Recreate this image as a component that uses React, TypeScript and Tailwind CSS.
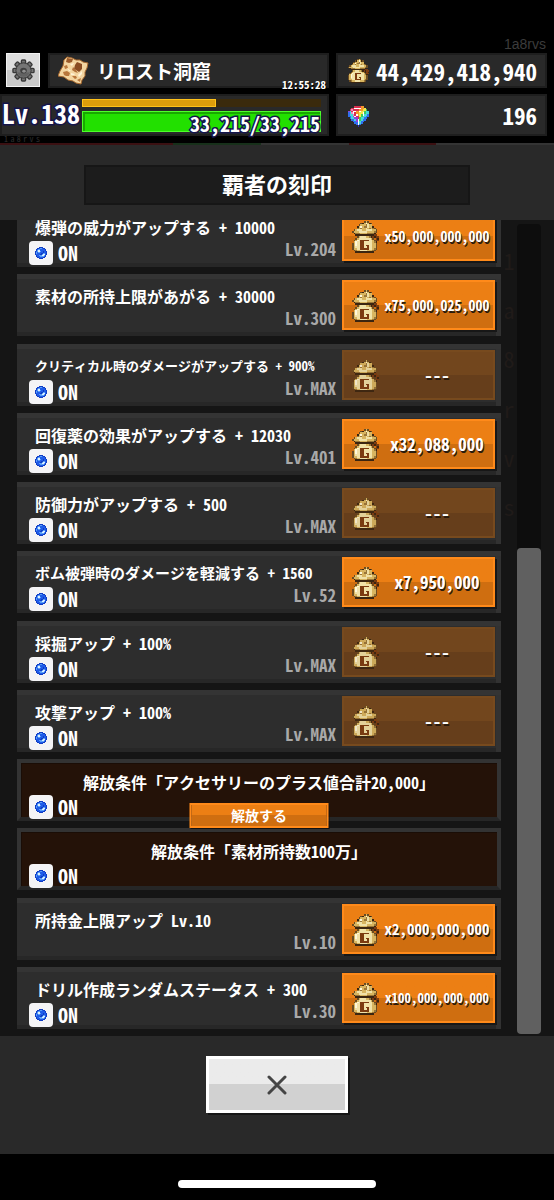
type Palette = Record<string, string>

const bagColors: Palette = {
  k: '#3b2510',
  b: '#7c3b10',
  o: '#6b4c22',
  d: '#9a7638',
  g: '#d8b560',
  c: '#f1e2a8',
  w: '#fff8da',
}

const bagPixels = [
  '.......ogo......',
  '.....okgwgko....',
  '....ogggdcgg....',
  '...kgwgddcggk...',
  '...dgdggcgdgdo..',
  '.ogcccggccccggo.',
  'ogggcccccggggdo.',
  '.kdddggggddddk..',
  '..kkkkkkkkkkkbb.',
  '...ogcccggdkbkbb',
  '..ogcccccccgo.bk',
  '.ogwcbbbbbccgobb',
  '.gwccbbcccccgdk.',
  'ogwccbbcccccggo.',
  'ogwccbbcbbccggo.',
  'ogcccbbccbccggo.',
  'oggccbbbbbccgdo.',
  '.odggccccgggdo..',
  '..kkkkkkkkkkk...',
]

const orbColors: Palette = { b: '#1f5ce8', m: '#5aa0f8', w: '#dcefff', d: '#0f3cc4' }

const orbPixels = [
  '....dddd....',
  '..ddbmmbdd..',
  '.dbmmbbbbbd.',
  '.dmwwbbbbbd.',
  'dbmwwmbbdbbd',
  'dmbmmbbbdbbd',
  'dmbbbbddmmbd',
  'dbbbbddmwwbd',
  '.dbbmmmwwmd.',
  '.dbbbmmmmbd.',
  '..ddbbbbdd..',
  '....dddd....',
]

const gemColors: Palette = {
  r: '#d9304f',
  p: '#f08ac0',
  w: '#ffffff',
  o: '#f39a2b',
  y: '#f4e64a',
  g: '#3fc95a',
  t: '#47d8d8',
  b: '#2f6ff0',
  n: '#2434b8',
  v: '#9440d8',
}

const gemPixels = [
  '....rrrroo...',
  '..rrwwwwooy..',
  '.rprrrrooyyg.',
  'vtrwwoowyygtt',
  'btpwrooyywgtt',
  'bttprwoygwttb',
  'bbtvwrrygttbb',
  '.bttvvrgttbb.',
  '..bbtvwgtbb..',
  '...bbvwtbb...',
  '....bbwtb....',
  '.....bwb.....',
  '......n......',
]

const PixelIcon = ({ pixels, colors, className }: { pixels: string[]; colors: Palette; className: string }) => (
  <svg
    className={className}
    viewBox={`0 0 ${pixels[0].length} ${pixels.length}`}
    preserveAspectRatio="none"
    shapeRendering="crispEdges"
    aria-hidden="true"
  >
    {pixels.map((line, y) =>
      line.split('').map((cell, x) =>
        cell === '.' ? null : <rect key={`${x}-${y}`} x={x} y={y} width="1" height="1" fill={colors[cell]} />
      )
    )}
  </svg>
)

const GearIcon = () => (
  <svg className="size-[23px]" viewBox="-12 -12 24 24" aria-hidden="true">
    {[0, 45, 90, 135, 180, 225, 270, 315].map((angle) => (
      <rect
        key={angle}
        x="-2.2"
        y="-11"
        width="4.4"
        height="6"
        rx="1"
        fill="#747474"
        stroke="#383838"
        strokeWidth="1.4"
        transform={`rotate(${angle})`}
      />
    ))}
    <circle r="8" fill="#6c6c6c" stroke="#383838" strokeWidth="1" />
    <circle r="7" fill="#757575" />
    <path d="M-6.500 2a7 7 0 0 0 13 0z" fill="#626262" />
    <ellipse rx="3.4" ry="3" fill="#3f3f3f" />
    <ellipse cx="0.500" cy="0.800" rx="1.8" ry="1.500" fill="#909090" />
  </svg>
)

const MapIcon = () => (
  <svg className="h-[29px] w-[31px]" viewBox="0 0 31 29" aria-hidden="true">
    <path d="M9 1l5 1 4 2 4 0 3 2 5 1-1 5-2 4 0 4-3 4-1 4-5-1-3-2-5-1-4-3-6-1 2-5 3-5 1-6z" fill="#f3d5a0" stroke="#a8692f" strokeWidth="1" />
    <path d="M9 2l6 1-1 3-3 1-3-1z" fill="#9a5a2a" />
    <path d="M19 6l5 2 0 5-3 3-3-2-2-1 1-4z" fill="#8a4c22" />
    <path d="M15 11l3 3 2 3-3-1-3-2z" fill="#b0713a" />
    <path d="M6 10l3-1 1 3-3 1zM5 16l4-1 3 2-1 3-3 0-2-1zM14 20l4 0 1 2-2 1zM19 24l4-2-1 4z" fill="#b9773c" />
    <path d="M12 8l4-1-2 3zM9 12l4 3-2 0zM20 19l4-4 0 3-3 3zM13 17l4 1-1 1-3 0z" fill="#fff3d6" />
  </svg>
)

type Engraving = {
  name: string
  size: string
  level?: string
  price?: string
  priceSize?: string
  toggle: boolean
  locked?: boolean
  unlockable?: boolean
}

const engravings: Engraving[] = [
  { name: '爆弾の威力がアップする + 10000', size: 'text-base', level: '204', price: '50,000,000,000', priceSize: 'text-sm', toggle: true },
  { name: '素材の所持上限があがる + 30000', size: 'text-base', level: '300', price: '75,000,025,000', priceSize: 'text-sm', toggle: false },
  { name: 'クリティカル時のダメージがアップする + 900%', size: 'text-[13px]', level: 'MAX', toggle: true },
  { name: '回復薬の効果がアップする + 12030', size: 'text-base', level: '401', price: '32,088,000', priceSize: 'text-[17px]', toggle: true },
  { name: '防御力がアップする + 500', size: 'text-base', level: 'MAX', toggle: true },
  { name: 'ボム被弾時のダメージを軽減する + 1560', size: 'text-[15px]', level: '52', price: '7,950,000', priceSize: 'text-[17px]', toggle: true },
  { name: '採掘アップ + 100%', size: 'text-base', level: 'MAX', toggle: true },
  { name: '攻撃アップ + 100%', size: 'text-base', level: 'MAX', toggle: true },
  { name: '解放条件「アクセサリーのプラス値合計20,000」', size: 'text-base', toggle: true, locked: true, unlockable: true },
  { name: '解放条件「素材所持数100万」', size: 'text-base', toggle: true, locked: true },
  { name: '所持金上限アップ Lv.10', size: 'text-base', level: '10', price: '2,000,000,000', priceSize: 'text-[15px]', toggle: false },
  { name: 'ドリル作成ランダムステータス + 300', size: 'text-base', level: '30', price: '100,000,000,000', priceSize: 'text-[13px]', toggle: true },
]

const watermark = '1a8rvs'.split('')

const Toggle = () => (
  <label className="flex h-6 items-center text-xl leading-6">
    <span className="relative mr-[5px] block size-6">
      <input type="checkbox" defaultChecked className="block size-6 appearance-none rounded-[4px] bg-[#f4f4f6]" />
      <PixelIcon pixels={orbPixels} colors={orbColors} className="pointer-events-none absolute inset-1.5 size-3" />
    </span>
    ON
  </label>
)

const PriceButton = ({ price, priceSize }: { price?: string; priceSize?: string }) => (
  <button
    disabled={!price}
    className={`flex h-[50px] w-[153px] shrink-0 items-center border-2 pl-2 ${
      price
        ? 'border-[#ff8a1a] bg-linear-to-b from-[#ec7f14] from-50% to-[#cf6e10] to-50% shadow-[2px_2px_0_#171717]'
        : 'border-[#774a1e] bg-linear-to-b from-[#72461d] from-50% to-[#663e1b] to-50%'
    }`}
  >
    <PixelIcon pixels={bagPixels} colors={bagColors} className={`mt-0.5 h-8 w-[27px] shrink-0 ${price ? '' : 'opacity-90'}`} />
    <span className={`flex-1 pl-0.5 text-center leading-5 whitespace-nowrap [text-shadow:1px_2px_0_#2a1a0c] ${priceSize ?? 'text-[17px]'}`}>
      {price ? `x${price}` : '---'}
    </span>
  </button>
)

const EngravingRow = ({ item }: { item: Engraving }) => {
  if (item.locked) {
    return (
      <li className="relative h-[62px] shrink-0 border-4 border-[#333] border-b-[#262626] bg-[#241208] px-2 shadow-[inset_1px_1px_0_#1a0d06]">
        <p className={`pt-[7px] text-center leading-[25px] ${item.size}`}>{item.name}</p>
        <Toggle />
        {item.unlockable && (
          <button className="absolute top-10 left-1/2 z-10 flex h-[25px] w-[139px] -translate-x-1/2 items-center justify-center border-2 border-[#ff8a1a] bg-linear-to-b from-[#ec7f14] from-50% to-[#cf6e10] to-50% pb-0.5 text-[14px] leading-5 shadow-[1px_1px_0_#111]">
            解放する
          </button>
        )}
      </li>
    )
  }
  return (
    <li className="flex h-[62px] shrink-0 bg-[#2d2d2d] pr-1.5 pl-3 shadow-[inset_0_5px_0_#343434,inset_-5px_0_0_#323232,inset_0_-4px_0_#272727]">
      <div className="flex min-w-0 flex-1 flex-col pt-3.5 pr-1.5">
        <p className={`mb-1.5 pl-1.5 whitespace-nowrap ${item.size} leading-4`}>{item.name}</p>
        <div className="flex items-start">
          {item.toggle && <Toggle />}
          <span className="ml-auto text-[17px] leading-4 text-[#a9a9a9]">Lv.{item.level}</span>
        </div>
      </div>
      <div className="pt-1.5">
        <PriceButton price={item.price} priceSize={item.priceSize} />
      </div>
    </li>
  )
}

const Header = () => (
  <header className="relative grid grid-cols-[329fr_218fr_7px] gap-y-1.5 pt-[53px] pb-[7px]">
    <span className="absolute top-9 right-2 font-['Liberation_Sans',sans-serif] text-[14px] leading-4 font-normal text-[#3c3c3c]">
      1a8rvs
    </span>
    <div className="flex h-[35px] gap-2 pl-1.5">
      <button aria-label="設定" className="flex h-[34px] w-[34px] shrink-0 items-center justify-center border border-[#f2f2f2] bg-linear-to-b from-[#dedede] from-50% to-[#c9c9c9] to-50%">
        <GearIcon />
      </button>
      <div className="flex flex-1 items-center border-2 border-[#1e1e1e] bg-[#292929] pl-2">
        <MapIcon />
        <span className="pl-2 text-[19px] leading-7">リロスト洞窟</span>
        <time className="mr-px ml-auto self-end text-[11px] leading-1 [text-shadow:1px_1px_0_#000]">12:55:28</time>
      </div>
    </div>
    <div className="ml-[7px] flex items-center border-2 border-[#1e1e1e] bg-[#292929] px-2 pl-2.5">
      <PixelIcon pixels={bagPixels} colors={bagColors} className="h-6 w-[21px]" />
      <span className="ml-auto text-[23px] leading-7">44,429,418,940</span>
    </div>
    <div className="col-start-1 flex h-[42px] items-center border-2 border-[#1e1e1e] bg-[#292929] pr-1.5">
      <span className="w-20 shrink-0 pb-1 text-[26px] leading-8 [paint-order:stroke_fill] [-webkit-text-stroke:3px_#15154a]">Lv.138</span>
      <div className="flex flex-1 flex-col gap-1">
        <div className="h-2 bg-[#3a2a0c]">
          <div className="h-2 w-[56%] border border-[#ffc21a] bg-[#dd9d0b]" />
        </div>
        <div className="flex h-[21px] items-center justify-end border border-[#4dff2a] bg-[#22e000] shadow-[inset_2px_2px_0_#18a800]">
          <span className="pt-1.5 text-[20px] leading-5 [paint-order:stroke_fill] [-webkit-text-stroke:3px_#15154a]">
            33,215/33,215
          </span>
        </div>
      </div>
    </div>
    <div className="ml-[7px] flex items-center border-2 border-[#1e1e1e] bg-[#292929] px-2 pl-2.5">
      <PixelIcon pixels={gemPixels} colors={gemColors} className="mt-0.5 size-[21px]" />
      <span className="ml-auto text-[23px] leading-7">196</span>
    </div>
    <div className="absolute bottom-0 left-1 flex w-9 justify-between text-[8px] leading-[8px] font-normal text-[#303030]">
      {watermark.map((letter) => (
        <span key={letter}>{letter}</span>
      ))}
    </div>
  </header>
)

export default function App() {
  return (
    <div className="flex h-screen flex-col bg-black font-['Noto_Sans_Mono_CJK_JP','Noto_Sans_CJK_JP',sans-serif] font-bold text-white">
      <Header />

      <div className="grid h-0.5 shrink-0 grid-cols-[173fr_88fr_88fr_87fr_118fr]">
        <span className="bg-[#3b1012]" />
        <span className="bg-[#17301a]" />
        <span className="bg-[#343434]" />
        <span className="bg-[#3b1012]" />
        <span className="bg-[#343434]" />
      </div>

      <div className="shrink-0 bg-[#292929] px-[84px] pt-5 pb-[15px]">
        <h1 className="border-2 border-[#161616] bg-[#1c1c1c] pb-1 text-center text-[22px] leading-8">覇者の刻印</h1>
      </div>

      <main className="flex min-h-0 flex-1 bg-[#151515] pr-[13px] pl-[17px]">
        <div className="flex flex-1 flex-col overflow-hidden">
          <ul className="-mt-[15px] mb-[7px] flex flex-1 shrink-0 flex-col justify-between gap-1">
            {engravings.map((item) => (
              <EngravingRow key={item.name} item={item} />
            ))}
          </ul>
        </div>
        <div className="flex h-[302px] w-4 flex-col items-center justify-between pt-6 text-[22px] leading-8 font-normal text-[#201b19]">
          {watermark.map((letter) => (
            <span key={letter}>{letter}</span>
          ))}
        </div>
        <div className="mt-1 mb-0.5 flex w-6 flex-col justify-end rounded-sm bg-[#0d0d0d]">
          <div className="h-3/5 rounded-[4px] bg-[#606060]" />
        </div>
      </main>

      <footer className="shrink-0">
        <div className="flex justify-center bg-[#292929] pt-5 pb-[41px]">
          <button
            aria-label="閉じる"
            className="flex h-[57px] w-[142px] items-center justify-center border-3 border-white bg-linear-to-b from-[#ebebeb] from-50% to-[#d1d1d1] to-50% shadow-[2px_2px_0_#161616]"
          >
            <svg className="size-5" viewBox="0 0 20 20" fill="none" stroke="#444" strokeWidth="3" strokeLinecap="round">
              <path d="M2 2l16 16M18 2L2 18" />
            </svg>
          </button>
        </div>
        <div className="flex h-[46px] justify-center pt-[26px]">
          <div className="h-2 w-[198px] rounded-full bg-white" />
        </div>
      </footer>
    </div>
  )
}
